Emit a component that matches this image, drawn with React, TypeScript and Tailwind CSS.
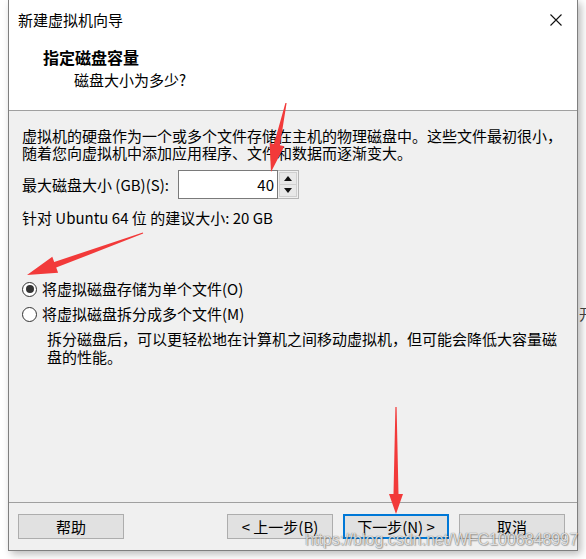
import React from 'react'

const arrowPoints = (
  x1: number,
  y1: number,
  x2: number,
  y2: number,
  head: number,
  headW: number,
  shaft: number,
) => {
  const dx = x2 - x1
  const dy = y2 - y1
  const len = Math.hypot(dx, dy)
  const ux = dx / len
  const uy = dy / len
  const nx = -uy
  const ny = ux
  const bx = x2 - ux * head
  const by = y2 - uy * head
  const p = (x: number, y: number) => `${x.toFixed(1)},${y.toFixed(1)}`
  return [
    p(x1 + nx * 0.6, y1 + ny * 0.6),
    p(bx + (nx * shaft) / 2, by + (ny * shaft) / 2),
    p(bx + (nx * headW) / 2, by + (ny * headW) / 2),
    p(x2, y2),
    p(bx - (nx * headW) / 2, by - (ny * headW) / 2),
    p(bx - (nx * shaft) / 2, by - (ny * shaft) / 2),
    p(x1 - nx * 0.6, y1 - ny * 0.6),
  ].join(' ')
}

const RedArrows: React.FC = () => (
  <svg
    className="pointer-events-none absolute left-0 top-0 z-20"
    width="586"
    height="559"
    viewBox="0 0 586 559"
  >
    <polygon points={arrowPoints(286, 103, 271, 172, 28, 15, 6)} fill="#f23a3a" />
    <polygon points={arrowPoints(143, 233, 27, 275, 30, 17, 6)} fill="#f23a3a" />
    <polygon points={arrowPoints(396, 407, 396, 514, 20, 14, 5)} fill="#f23a3a" />
  </svg>
)

const Radio: React.FC<{ checked?: boolean }> = ({ checked }) => (
  <span className="flex h-[15px] w-[15px] items-center justify-center rounded-full border-[1.5px] border-[#333] bg-white">
    {checked && <span className="h-[8px] w-[8px] rounded-full bg-[#333]" />}
  </span>
)

const DialogButton: React.FC<{ children: React.ReactNode; primary?: boolean }> = ({
  children,
  primary,
}) => (
  <button
    type="button"
    className={
      primary
        ? 'flex h-[25px] w-[106px] items-center justify-center border-2 border-[#0078d7] bg-[#e1e1e1] text-[15px] leading-none text-black'
        : 'flex h-[25px] w-[106px] items-center justify-center border border-[#adadad] bg-[#e1e1e1] text-[15px] leading-none text-black'
    }
  >
    {children}
  </button>
)

export default function App() {
  return (
    <div className="relative h-[559px] w-[586px] overflow-hidden bg-white [font-family:'Noto_Sans_CJK_SC',sans-serif] text-black">
      {/* window behind */}
      <span className="absolute left-[579px] top-[304px] text-[15px] leading-[20px] text-[#444]">开</span>

      <div className="relative z-10 ml-[8px] flex h-[551px] w-[570px] flex-col border-x border-b border-[#7f7f7f] bg-[#f0f0f0] shadow-[3px_3px_8px_rgba(0,0,0,0.28)]">
        <div className="h-[111px] border-b border-[#a0a0a0] bg-white">
          <div className="flex h-[40px] items-center justify-between pl-[9px] pr-[15px]">
            <span className="text-[15px] leading-[20px]">新建虚拟机向导</span>
            <svg width="12" height="12" viewBox="0 0 12 12">
              <path d="M0.5 0.5 L11.5 11.5 M11.5 0.5 L0.5 11.5" stroke="#111" strokeWidth="1.1" />
            </svg>
          </div>
          <div className="pl-[34px] pt-[7px] text-[16px] font-bold leading-[20px]">指定磁盘容量</div>
          <div className="mt-[3px] pl-[65px] text-[15px] leading-[20px]">磁盘大小为多少?</div>
        </div>

        <div className="flex-1 pl-[13px] text-[15px]">
          <p className="whitespace-nowrap pt-[16px] leading-[17px]">
            虚拟机的硬盘作为一个或多个文件存储在主机的物理磁盘中。这些文件最初很小，
            <br />
            随着您向虚拟机中添加应用程序、文件和数据而逐渐变大。
          </p>

          <div className="mt-[9px] flex h-[29px] items-center">
            <span className="w-[156px] leading-[17px]">最大磁盘大小 (GB)(S):</span>
            <div className="flex h-[29px]">
              <div className="flex w-[100px] items-center justify-end border border-[#7a7a7a] bg-white pr-[3px] leading-none">
                40
              </div>
              <div className="flex w-[21px] flex-col border border-l-0 border-[#b5b5b5] bg-[#f0f0f0] p-px">
                <div className="flex flex-1 items-center justify-center border border-[#cfcfcf] bg-[#e8e8e8]">
                  <svg width="8" height="5" viewBox="0 0 8 5">
                    <path d="M0 5 L4 0 L8 5 Z" fill="#111" />
                  </svg>
                </div>
                <div className="flex flex-1 items-center justify-center border border-t-0 border-[#cfcfcf] bg-[#e8e8e8]">
                  <svg width="8" height="5" viewBox="0 0 8 5">
                    <path d="M0 0 L8 0 L4 5 Z" fill="#111" />
                  </svg>
                </div>
              </div>
            </div>
          </div>

          <p className="mt-[10px] leading-[17px]">针对 Ubuntu 64 位 的建议大小: 20 GB</p>

          <label className="mt-[53px] flex h-[20px] items-center gap-[5px]">
            <Radio checked />
            <span className="leading-[20px]">将虚拟磁盘存储为单个文件(O)</span>
          </label>
          <label className="mt-[5px] flex h-[20px] items-center gap-[5px]">
            <Radio />
            <span className="leading-[20px]">将虚拟磁盘拆分成多个文件(M)</span>
          </label>
          <p className="ml-[25px] mt-[6px] w-[515px] leading-[18px]">
            拆分磁盘后，可以更轻松地在计算机之间移动虚拟机，但可能会降低大容量磁盘的性能。
          </p>
        </div>

        <div className="flex h-[48px] items-center justify-between border-t border-[#a0a0a0] pl-[9px] pr-[12px]">
          <DialogButton>帮助</DialogButton>
          <div className="flex gap-[10px]">
            <DialogButton>&lt; 上一步(B)</DialogButton>
            <DialogButton primary>下一步(N) &gt;</DialogButton>
            <DialogButton>取消</DialogButton>
          </div>
        </div>
      </div>

      <span className="pointer-events-none absolute left-[305px] top-[530px] z-20 whitespace-nowrap text-[16px] leading-[20px] text-white/80 [font-family:'Liberation_Sans',Arial,sans-serif] [text-shadow:0_0_1px_rgba(0,0,0,0.7),1px_1px_1px_rgba(0,0,0,0.25)]">
        https://blog.csdn.net/WFC1006848997
      </span>

      <RedArrows />
    </div>
  )
}
